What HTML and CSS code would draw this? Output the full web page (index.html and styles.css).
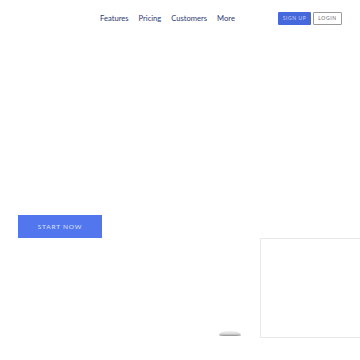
FILE: index.html
```html
<!DOCTYPE html>
<html lang="en">
<head>
    <meta charset="UTF-8">
    <meta name="viewport" content="width=device-width, initial-scale=1.0">
    <title>Landing</title>
    <link rel="stylesheet" href="styles.css">
</head>
<body>
    <header class="header">
        <nav class="nav">
            <a href="#">Features</a>
            <a href="#">Pricing</a>
            <a href="#">Customers</a>
            <a href="#">More</a>
        </nav>
        <div class="auth">
            <button class="btn-signup">SIGN UP</button>
            <button class="btn-login">LOGIN</button>
        </div>
    </header>

    <section class="hero">
        <button class="btn-start">START NOW</button>
    </section>

    <section class="showcase">
        <div class="mouse"></div>
        <div class="frame"></div>
    </section>
</body>
</html>
```

FILE: styles.css
```css
body { margin: 0; font-family: "Lato", "Noto Sans", sans-serif; background: #fff; overflow: hidden; }
.header { display: flex; align-items: center; height: 36px; padding: 0 18px 0 100px; }
.nav { display: flex; gap: 10px; }
.nav a { color: #2d3a73; font-size: 7.6px; text-decoration: none; }
.auth { display: flex; gap: 2px; margin-left: auto; }
.auth button { font-family: inherit; font-size: 5px; letter-spacing: 0.6px; height: 13px; padding: 0; border-radius: 1px; cursor: pointer; }
.btn-signup { width: 33px; background: #4668dd; color: #c8d2f4; border: none; }
.btn-login { width: 29px; background: #fff; color: #666; border: 1px solid #9a9a9a; }
.hero { height: 202px; display: flex; align-items: flex-end; padding: 0 0 0 18px; }
.btn-start { width: 84px; height: 23px; background: #5276ee; color: #dde4fb; border: none; font-family: inherit; font-size: 6.5px; letter-spacing: 0.8px; cursor: pointer; }
.showcase { display: flex; align-items: flex-end; justify-content: flex-end; gap: 19px; }
.frame { width: 99px; height: 98px; border: 1px solid #e8e8e8; border-right: none; }
.mouse { width: 22px; height: 5px; margin-bottom: 2px; border-radius: 50% 50% 40% 40% / 100% 100% 20% 20%; background: linear-gradient(180deg, #f4f4f4 0%, #d6d6d6 60%, #8a8a8a 100%); }
```
